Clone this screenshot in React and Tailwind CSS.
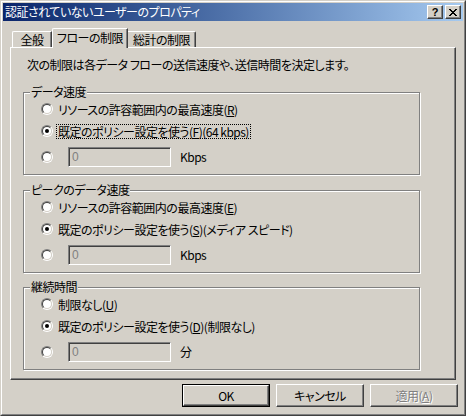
import React from "react";

const FONT = "[font-family:'Noto_Sans_CJK_JP','Noto_Sans_CJK_SC',sans-serif] [font-feature-settings:'palt'] tracking-[-0.5px]";

function Radio({ checked }) {
  return (
    <div className="w-[12px] h-[12px] rounded-full border border-t-[#808080] border-l-[#808080] border-r-white border-b-white shrink-0">
      <div className="w-full h-full rounded-full bg-white border border-t-[#404040] border-l-[#404040] border-r-[#d4d0c8] border-b-[#d4d0c8] flex items-center justify-center">
        {checked && <div className="w-[4px] h-[4px] rounded-full bg-black" />}
      </div>
    </div>
  );
}

function Mn({ c }) {
  return <span className="underline underline-offset-1">{c}</span>;
}

function Row({ checked, children, focus }) {
  return (
    <div className="flex items-center h-[20px]">
      <Radio checked={checked} />
      <div className={"ml-[3px] leading-[13px] px-px " + (focus ? "border border-dotted border-black" : "border border-transparent")}>
        {children}
      </div>
    </div>
  );
}

function InputRow({ unit }) {
  return (
    <div className="flex items-center h-[20px]">
      <Radio />
      <div className="ml-[15px] w-[103px] h-[20px] bg-[#d4d0c8] border border-t-[#808080] border-l-[#808080] border-r-white border-b-white shadow-[inset_1px_1px_0_#404040,inset_-1px_-1px_0_#d4d0c8] flex items-center pl-[3px] text-[#808080] text-[12px] [font-family:'Liberation_Sans',sans-serif]">
        0
      </div>
      <div className="ml-[9px]">{unit}</div>
    </div>
  );
}

function Group({ label, children, className }) {
  return (
    <div className={"relative w-[397px] h-[83px] border border-[#808080] shadow-[1px_1px_0_#fff,inset_1px_1px_0_#fff] pl-[17px] pt-[6px] " + className}>
      <div className="absolute -top-[8px] left-[6px] bg-[#d4d0c8] px-px leading-[14px]">{label}</div>
      {children}
    </div>
  );
}

function Btn({ children, def, disabled }) {
  return (
    <div className={"w-[88px] h-[23px] bg-[#d4d0c8] flex items-center justify-center " + (def ? "border border-black" : "")}>
      <div className="w-full h-full border border-t-white border-l-white border-r-[#404040] border-b-[#404040] shadow-[inset_-1px_-1px_0_#808080] flex items-center justify-center">
        <span className={disabled ? "text-[#808080] [text-shadow:1px_1px_0_#fff]" : ""}>{children}</span>
      </div>
    </div>
  );
}

export default function App() {
  return (
    <div className={"w-[466px] h-[416px] bg-[#d4d0c8] text-[12px] text-black " + FONT}>
      <div className="w-full h-full border border-t-[#d4d0c8] border-l-[#d4d0c8] border-r-[#404040] border-b-[#404040]">
        <div className="w-full h-full border border-t-white border-l-white border-r-[#808080] border-b-[#808080] p-px flex flex-col">
          {/* title bar */}
          <div className="h-[18px] bg-gradient-to-r from-[#0a246a] to-[#a6caf0] flex items-center pl-[2px] pr-[2px]">
            <span className="text-white leading-[14px] whitespace-nowrap">認証されていないユーザーのプロパティ</span>
            <div className="ml-auto flex gap-[2px]">
              <div className="w-[16px] h-[14px] bg-[#d4d0c8] border border-t-white border-l-white border-r-[#404040] border-b-[#404040] shadow-[inset_-1px_-1px_0_#808080] flex items-center justify-center text-[11px] font-bold leading-none tracking-normal [font-family:'Liberation_Sans',sans-serif]">
                ?
              </div>
              <div className="w-[16px] h-[14px] bg-[#d4d0c8] border border-t-white border-l-white border-r-[#404040] border-b-[#404040] shadow-[inset_-1px_-1px_0_#808080] flex items-center justify-center">
                <svg width="8" height="7" viewBox="0 0 8 7" shapeRendering="crispEdges">
                  <path d="M0 0h2v1h-2zM6 0h2v1h-2zM1 1h2v1h-2zM5 1h2v1h-2zM2 2h4v1h-4zM3 3h2v1h-2zM2 4h4v1h-4zM1 5h2v1h-2zM5 5h2v1h-2zM0 6h2v1h-2zM6 6h2v1h-2z" fill="#000" />
                </svg>
              </div>
            </div>
          </div>

          {/* tabs */}
          <div className="flex items-end h-[19px] mt-[7px] ml-[9px] relative z-10">
            <div className="w-[40px] h-[16px] border-t border-l border-white rounded-tl-[2px] shadow-[inset_-1px_0_0_#808080] border-r border-r-[#404040] flex items-center justify-center leading-[14px]">全般</div>
            <div className="w-[76px] h-[20px] -mb-px bg-[#d4d0c8] border-t border-l border-white rounded-tl-[2px] border-r border-r-[#404040] shadow-[inset_-1px_0_0_#808080] flex items-center justify-center leading-[14px] pb-[2px]">フローの制限</div>
            <div className="w-[68px] h-[16px] border-t border-white rounded-tr-[2px] border-r border-r-[#404040] shadow-[inset_-1px_0_0_#808080] flex items-center justify-center leading-[14px]">総計の制限</div>
          </div>

          {/* panel */}
          <div className="mx-[7px] h-[333px] border border-t-white border-l-white border-r-[#404040] border-b-[#404040] shadow-[inset_-1px_-1px_0_#808080] pl-[12px] pt-[10px]">
            <div className="ml-[4px] leading-[14px] whitespace-nowrap">次の制限は各データ フローの送信速度や、送信時間を決定します。</div>

            <Group label="データ速度" className="mt-[20px]">
              <Row>リソースの許容範囲内の最高速度(<Mn c="R" />)</Row>
              <div className="mt-[2px]">
                <Row checked focus>既定のポリシー設定を使う(<Mn c="F" />)(64 kbps)</Row>
              </div>
              <div className="mt-[6px]">
                <InputRow unit="Kbps" />
              </div>
            </Group>

            <Group label="ピークのデータ速度" className="mt-[15px]">
              <Row>リソースの許容範囲内の最高速度(<Mn c="E" />)</Row>
              <div className="mt-[2px]">
                <Row checked>既定のポリシー設定を使う(<Mn c="S" />)(メディア スピード)</Row>
              </div>
              <div className="mt-[6px]">
                <InputRow unit="Kbps" />
              </div>
            </Group>

            <Group label="継続時間" className="mt-[14px]">
              <Row>制限なし(<Mn c="U" />)</Row>
              <div className="mt-[2px]">
                <Row checked>既定のポリシー設定を使う(<Mn c="D" />)(制限なし)</Row>
              </div>
              <div className="mt-[6px]">
                <InputRow unit="分" />
              </div>
            </Group>
          </div>

          {/* buttons */}
          <div className="flex justify-end gap-[6px] pr-[5px] mt-[4px]">
            <Btn def>OK</Btn>
            <Btn>キャンセル</Btn>
            <Btn disabled>
              適用(<Mn c="A" />)
            </Btn>
          </div>
        </div>
      </div>
    </div>
  );
}
